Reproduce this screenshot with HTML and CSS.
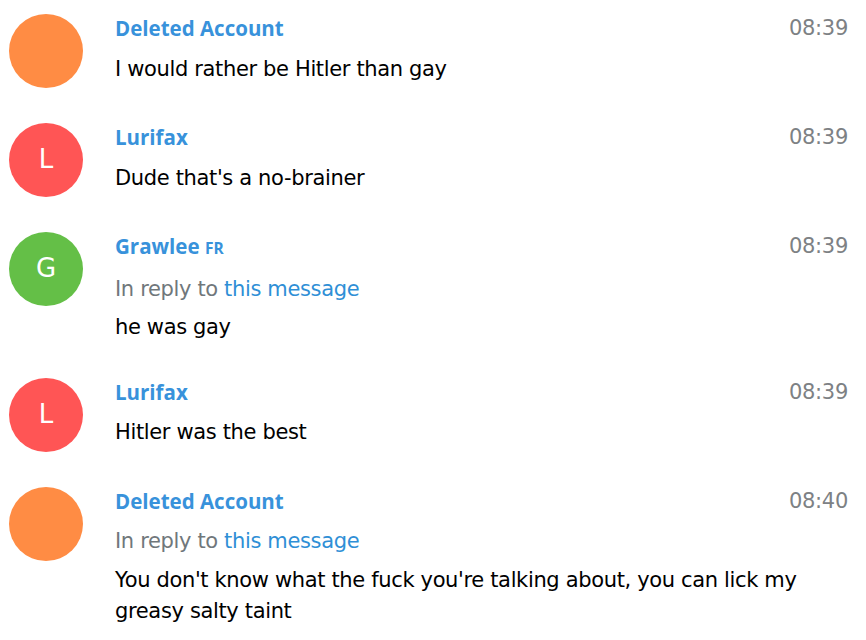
FILE: index.html
```html
<!DOCTYPE html>
<html>
<head>
<meta charset="utf-8">
<link rel="stylesheet" href="styles.css">
</head>
<body>
<div class="history">
  <div class="message">
    <div class="userpic color_orange"></div>
    <div class="body">
      <div class="date">08:39</div>
      <div class="from_name">Deleted Account</div>
      <div class="text">I would rather be Hitler than gay</div>
    </div>
  </div>
  <div class="message">
    <div class="userpic color_red"><span class="initials">L</span></div>
    <div class="body">
      <div class="date">08:39</div>
      <div class="from_name">Lurifax</div>
      <div class="text">Dude that's a no-brainer</div>
    </div>
  </div>
  <div class="message">
    <div class="userpic color_green"><span class="initials">G</span></div>
    <div class="body">
      <div class="date">08:39</div>
      <div class="from_name">Grawlee <span class="badge">FR</span></div>
      <div class="reply_to">In reply to <a href="#">this message</a></div>
      <div class="text">he was gay</div>
    </div>
  </div>
  <div class="message">
    <div class="userpic color_red"><span class="initials">L</span></div>
    <div class="body">
      <div class="date">08:39</div>
      <div class="from_name">Lurifax</div>
      <div class="text">Hitler was the best</div>
    </div>
  </div>
  <div class="message">
    <div class="userpic color_orange"></div>
    <div class="body">
      <div class="date">08:40</div>
      <div class="from_name">Deleted Account</div>
      <div class="reply_to">In reply to <a href="#">this message</a></div>
      <div class="text">You don't know what the fuck you're talking about, you can lick my greasy salty taint</div>
    </div>
  </div>
</div>
</body>
</html>
```
FILE: styles.css
```css
html, body {
  margin: 0;
  background: #fff;
}
body {
  font-family: "DejaVu Sans", Verdana, sans-serif;
  font-size: 21px;
  line-height: 31.5px;
  color: #000;
}
.history {
  padding: 0 18px 0 9px;
}
.message {
  display: flex;
  align-items: flex-start;
  padding: 14px 0 21px;
}
.message:nth-child(3) {
  padding-bottom: 20px;
}
.userpic {
  flex: none;
  width: 74px;
  height: 74px;
  border-radius: 50%;
  display: flex;
  align-items: center;
  justify-content: center;
}
.color_orange { background: #ff8c44; }
.color_red { background: #ff5555; }
.color_green { background: #64bf47; }
.initials {
  color: #fff;
  font-family: "DejaVu Sans", sans-serif;
  font-size: 26px;
}
.body {
  flex: 1;
  margin-left: 32px;
  margin-top: -1px;
}
.date {
  float: right;
  color: #7d8184;
  font-family: "DejaVu Sans", sans-serif;
  letter-spacing: -0.3px;
}
.from_name {
  font-family: "Open Sans", sans-serif;
  font-size: 20.5px;
  font-weight: 700;
  color: #3892db;
  padding-bottom: 9px;
}
.badge {
  font-size: 15.5px;
  margin-left: 0;
}
.reply_to {
  color: #70777b;
  letter-spacing: -0.35px;
  padding-bottom: 7px;
}
.reply_to a {
  color: #2f8fd6;
  text-decoration: none;
}
.text {
  letter-spacing: -0.35px;
  word-wrap: break-word;
}
```
